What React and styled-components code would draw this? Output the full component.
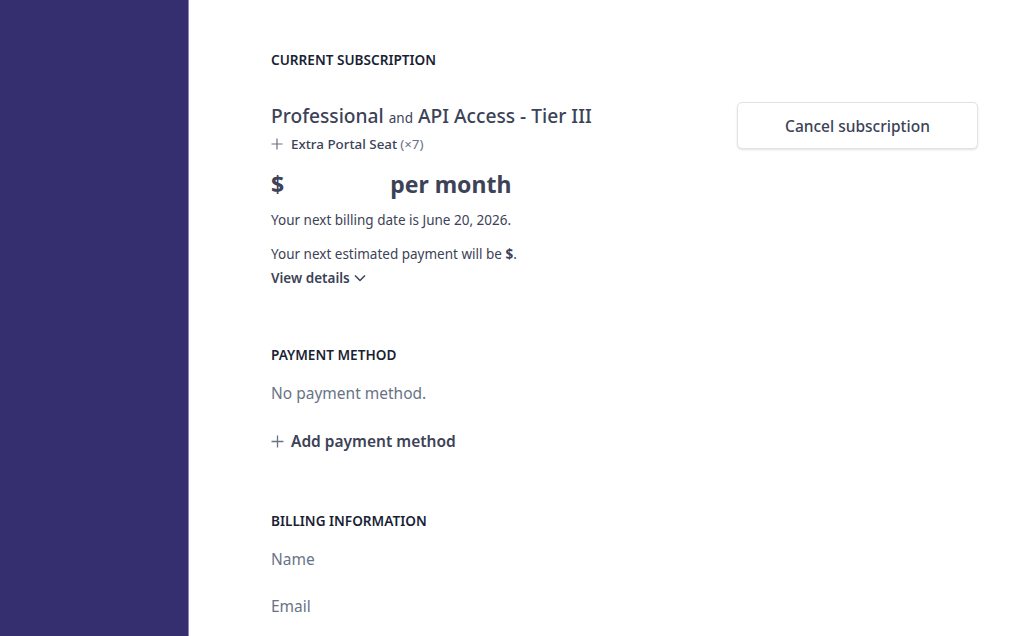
import React from "react";
import styled, { createGlobalStyle } from "styled-components";

const Global = createGlobalStyle`
  html, body { margin: 0; padding: 0; background: #fff; }
  body { font-family: "Noto Sans", "Open Sans", sans-serif; -webkit-font-smoothing: antialiased; }
  * { box-sizing: border-box; }
`;

const Layout = styled.div`
  display: flex;
  height: 636px;
  overflow: hidden;
`;

const Sidebar = styled.aside`
  width: 189px;
  flex-shrink: 0;
  background: #352f6f;
  border-right: 1px solid #8b86b8;
`;

const Main = styled.main`
  flex: 1;
  padding: 50px 46px 0 82px;
  color: #3c4257;
`;

const Section = styled.section`
  margin-bottom: ${(p) => p.$gap || 0}px;
`;

const Label = styled.h2`
  margin: 0;
  font-size: 13.6px;
  font-weight: 600;
  line-height: 20px;
  color: #1a1f36;
  letter-spacing: 0;
`;

const SubRow = styled.div`
  display: flex;
  justify-content: space-between;
  align-items: flex-start;
  margin-top: 32px;
`;

const PlanTitle = styled.div`
  font-size: 19.2px;
  font-weight: 500;
  line-height: 28px;
  color: #3c4257;
`;

const Small = styled.span`
  font-size: 13.5px;
  font-weight: 400;
`;

const Addon = styled.div`
  display: flex;
  align-items: center;
  gap: 8px;
  margin-top: 3px;
  font-size: 13.4px;
  font-weight: 500;
  line-height: 18px;
  color: #3c4257;
`;

const Qty = styled.span`
  color: #697386;
  font-weight: 400;
  margin-left: -5px;
`;

const Price = styled.div`
  margin-top: 15px;
  font-size: 23px;
  font-weight: 700;
  line-height: 32px;
  color: #3c4257;
  display: flex;
`;

const Blank = styled.span`
  display: inline-block;
  width: 106px;
`;

const Body = styled.p`
  margin: ${(p) => p.$mt || 0}px 0 0;
  font-size: 13.5px;
  line-height: 20px;
  color: #3c4257;
`;

const Strong = styled.strong`
  font-weight: 700;
`;

const LinkButton = styled.button`
  margin-top: 4px;
  padding: 0;
  border: 0;
  background: none;
  display: flex;
  align-items: center;
  gap: 4px;
  font-family: inherit;
  font-size: 13.5px;
  font-weight: 600;
  line-height: 20px;
  color: #3c4257;
  cursor: pointer;
`;

const CancelButton = styled.button`
  width: 241px;
  height: 47px;
  background: #fff;
  border: 1px solid #e0e3e9;
  border-radius: 5px;
  box-shadow: 0 1px 2px rgba(60, 66, 87, 0.16);
  font-family: inherit;
  font-size: 15.5px;
  font-weight: 500;
  color: #3c4257;
  cursor: pointer;
`;

const Muted = styled.p`
  margin: ${(p) => p.$mt || 0}px 0 0;
  font-size: 15.5px;
  line-height: 24px;
  color: #697386;
`;

const AddButton = styled.button`
  margin-top: 24px;
  padding: 0;
  border: 0;
  background: none;
  display: flex;
  align-items: center;
  gap: 7px;
  font-family: inherit;
  font-size: 15.5px;
  font-weight: 600;
  line-height: 24px;
  color: #3c4257;
`;

const Plus = ({ size = 12 }) => (
  <svg width={size} height={size} viewBox="0 0 12 12" fill="none" stroke="#697386" strokeWidth="1.2">
    <path d="M6 0.5v11M0.5 6h11" />
  </svg>
);

const Chevron = () => (
  <svg width="12" height="8" viewBox="0 0 12 8" fill="none" stroke="#3c4257" strokeWidth="1.5">
    <path d="M1 1.5l5 5 5-5" />
  </svg>
);

export default function App() {
  return (
    <>
      <Global />
      <Layout>
        <Sidebar />
        <Main>
          <Section $gap={57}>
            <Label>CURRENT SUBSCRIPTION</Label>
            <SubRow>
              <div>
                <PlanTitle>
                  Professional <Small>and</Small> API Access - Tier III
                </PlanTitle>
                <Addon>
                  <Plus size={12} />
                  <span>Extra Portal Seat</span>
                  <Qty>(×7)</Qty>
                </Addon>
                <Price>
                  <span>$</span>
                  <Blank />
                  <span>per month</span>
                </Price>
                <Body $mt={10}>Your next billing date is June 20, 2026.</Body>
                <Body $mt={14}>
                  Your next estimated payment will be <Strong>$</Strong>.
                </Body>
                <LinkButton>
                  View details <Chevron />
                </LinkButton>
              </div>
              <CancelButton>Cancel subscription</CancelButton>
            </SubRow>
          </Section>
          <Section $gap={58}>
            <Label>PAYMENT METHOD</Label>
            <Muted $mt={16}>No payment method.</Muted>
            <AddButton>
              <Plus size={13} />
              Add payment method
            </AddButton>
          </Section>
          <Section>
            <Label>BILLING INFORMATION</Label>
            <Muted $mt={16}>Name</Muted>
            <Muted $mt={23}>Email</Muted>
          </Section>
        </Main>
      </Layout>
    </>
  );
}
